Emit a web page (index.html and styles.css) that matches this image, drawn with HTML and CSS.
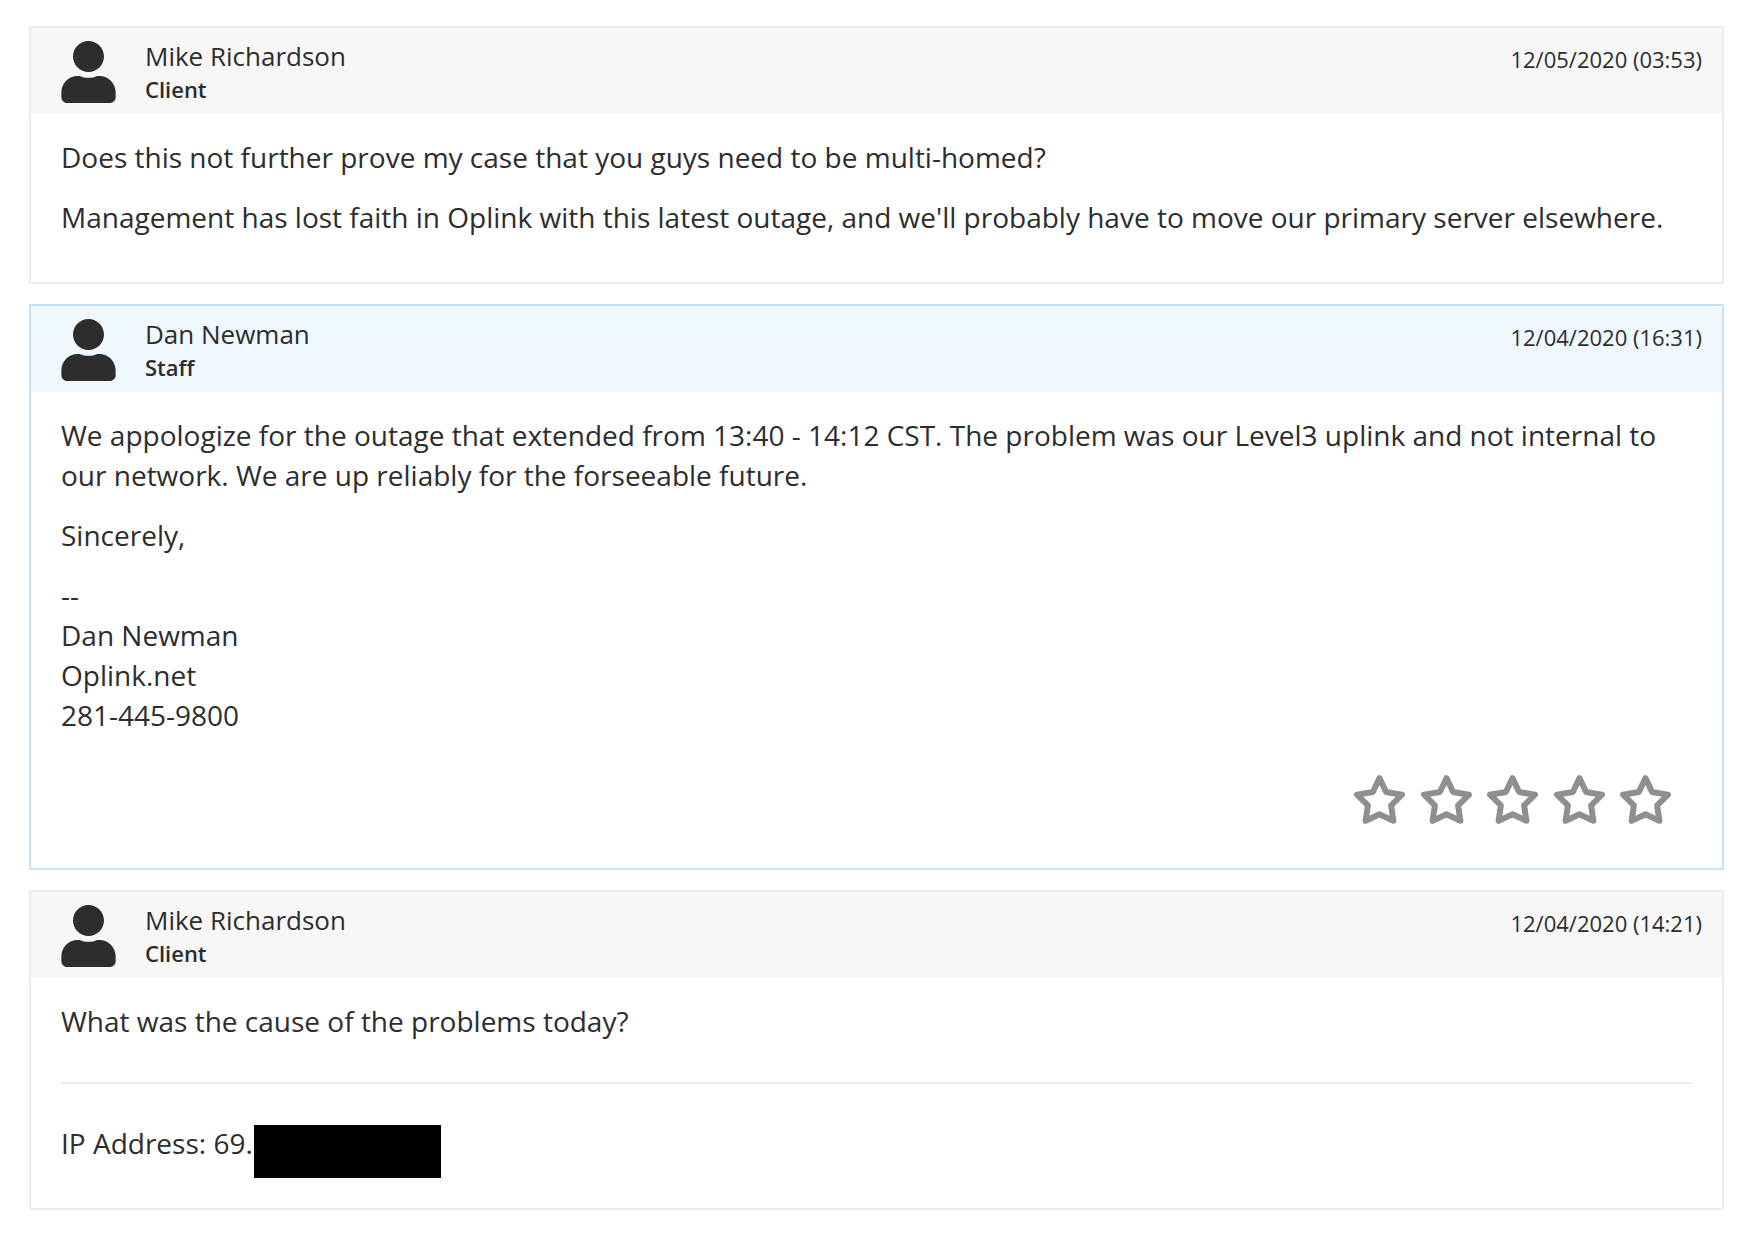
FILE: index.html
```html
<!DOCTYPE html>
<html lang="en">
<head>
    <meta charset="UTF-8">
    <meta name="viewport" content="width=device-width, initial-scale=1.0">
    <title>Support Ticket</title>
    <link rel="stylesheet" href="styles.css">
</head>
<body>
    <!-- shared icons -->
    <svg class="sprite" aria-hidden="true">
        <symbol id="user" viewBox="0 0 448 512">
            <path d="M224 256c70.7 0 128-57.3 128-128S294.7 0 224 0 96 57.3 96 128s57.3 128 128 128zm89.6 32h-16.7c-22.2 10.2-46.9 16-72.9 16s-50.6-5.8-72.9-16h-16.7C60.2 288 0 348.2 0 422.4V464c0 26.5 21.5 48 48 48h352c26.5 0 48-21.5 48-48v-41.6c0-74.2-60.2-134.4-134.4-134.4z"/>
        </symbol>
        <symbol id="star" viewBox="0 0 154 147">
            <path d="M77 9L97 51L145 59L112 91L119 138L77 118L35 138L42 91L9 59L57 51Z"/>
        </symbol>
    </svg>

    <main class="ticket-replies">
        <article class="reply">
            <header class="reply-header">
                <svg class="user-icon" aria-hidden="true"><use href="#user"/></svg>
                <div class="user">
                    <div class="name">Mike Richardson</div>
                    <div class="type">Client</div>
                </div>
                <time class="date" datetime="2020-12-05T03:53">12/05/2020 (03:53)</time>
            </header>
            <div class="message">
                <p>Does this not further prove my case that you guys need to be multi-homed?</p>
                <p>Management has lost faith in Oplink with this latest outage, and we'll probably have to move our primary server elsewhere.</p>
            </div>
        </article>

        <article class="reply staff">
            <header class="reply-header">
                <svg class="user-icon" aria-hidden="true"><use href="#user"/></svg>
                <div class="user">
                    <div class="name">Dan Newman</div>
                    <div class="type">Staff</div>
                </div>
                <time class="date" datetime="2020-12-04T16:31">12/04/2020 (16:31)</time>
            </header>
            <div class="message">
                <p>We appologize for the outage that extended from 13:40 - 14:12 CST. The problem was our Level3 uplink and not internal to our network. We are up reliably for the forseeable future.</p>
                <p>Sincerely,</p>
                <p>--<br>Dan Newman<br>Oplink.net<br>281-445-9800</p>
                <div class="rating">
                    <button type="button" class="star" aria-label="Rate 1"><svg><use href="#star"/></svg></button>
                    <button type="button" class="star" aria-label="Rate 2"><svg><use href="#star"/></svg></button>
                    <button type="button" class="star" aria-label="Rate 3"><svg><use href="#star"/></svg></button>
                    <button type="button" class="star" aria-label="Rate 4"><svg><use href="#star"/></svg></button>
                    <button type="button" class="star" aria-label="Rate 5"><svg><use href="#star"/></svg></button>
                </div>
            </div>
        </article>

        <article class="reply">
            <header class="reply-header">
                <svg class="user-icon" aria-hidden="true"><use href="#user"/></svg>
                <div class="user">
                    <div class="name">Mike Richardson</div>
                    <div class="type">Client</div>
                </div>
                <time class="date" datetime="2020-12-04T14:21">12/04/2020 (14:21)</time>
            </header>
            <div class="message">
                <p>What was the cause of the problems today?</p>
                <hr>
                <p class="ip-address">IP Address: 69.<span class="redacted"></span></p>
            </div>
        </article>
    </main>
</body>
</html>
```
FILE: styles.css
```css
* {
    margin: 0;
    padding: 0;
    box-sizing: border-box;
}

body {
    font-family: 'Open Sans', sans-serif;
    font-size: 28px;
    line-height: 40px;
    color: #2d2d2d;
    background: #fff;
}

.sprite {
    display: none;
}

.ticket-replies {
    display: flex;
    flex-direction: column;
    gap: 20px;
    padding: 26px 40px 26px 29px;
}

.reply {
    border: 2px solid #ececec;
}

.reply-header {
    display: flex;
    align-items: flex-start;
    padding: 8px 20px 11px 30px;
    background: #f7f7f7;
}

.reply.staff {
    border-color: #c6e1fa;
}

.reply.staff .reply-header {
    background: #eff7ff;
}

.user-icon {
    width: 55px;
    height: 62px;
    margin-top: 5px;
    fill: currentColor;
}

.user {
    flex: 1;
    padding-left: 29px;
}

.name {
    font-size: 26px;
}

.type {
    font-size: 22px;
    font-weight: 600;
    line-height: 26px;
}

.date {
    padding-top: 3px;
    font-size: 22px;
}

.message {
    padding: 23px 30px 25px;
}

.message p {
    margin-bottom: 20px;
}

.message hr {
    margin: 41px 0 39px;
    border: none;
    border-top: 2px solid #ececec;
}

/* star rating */
.rating {
    display: flex;
    justify-content: space-between;
    width: 317px;
    margin-left: auto;
    margin-right: 21px;
    padding: 20px 0 19px;
}

.star {
    width: 51px;
    height: 49px;
    border: none;
    background: transparent;
    cursor: pointer;
}

.star svg {
    display: block;
    width: 100%;
    height: 100%;
    fill: none;
    stroke: #8f8f8f;
    stroke-width: 18;
    stroke-linejoin: round;
}

.ip-address {
    position: relative;
}

.redacted {
    position: absolute;
    top: 2px;
    width: 187px;
    height: 53px;
    margin-left: 1px;
    background: #000;
}
```
